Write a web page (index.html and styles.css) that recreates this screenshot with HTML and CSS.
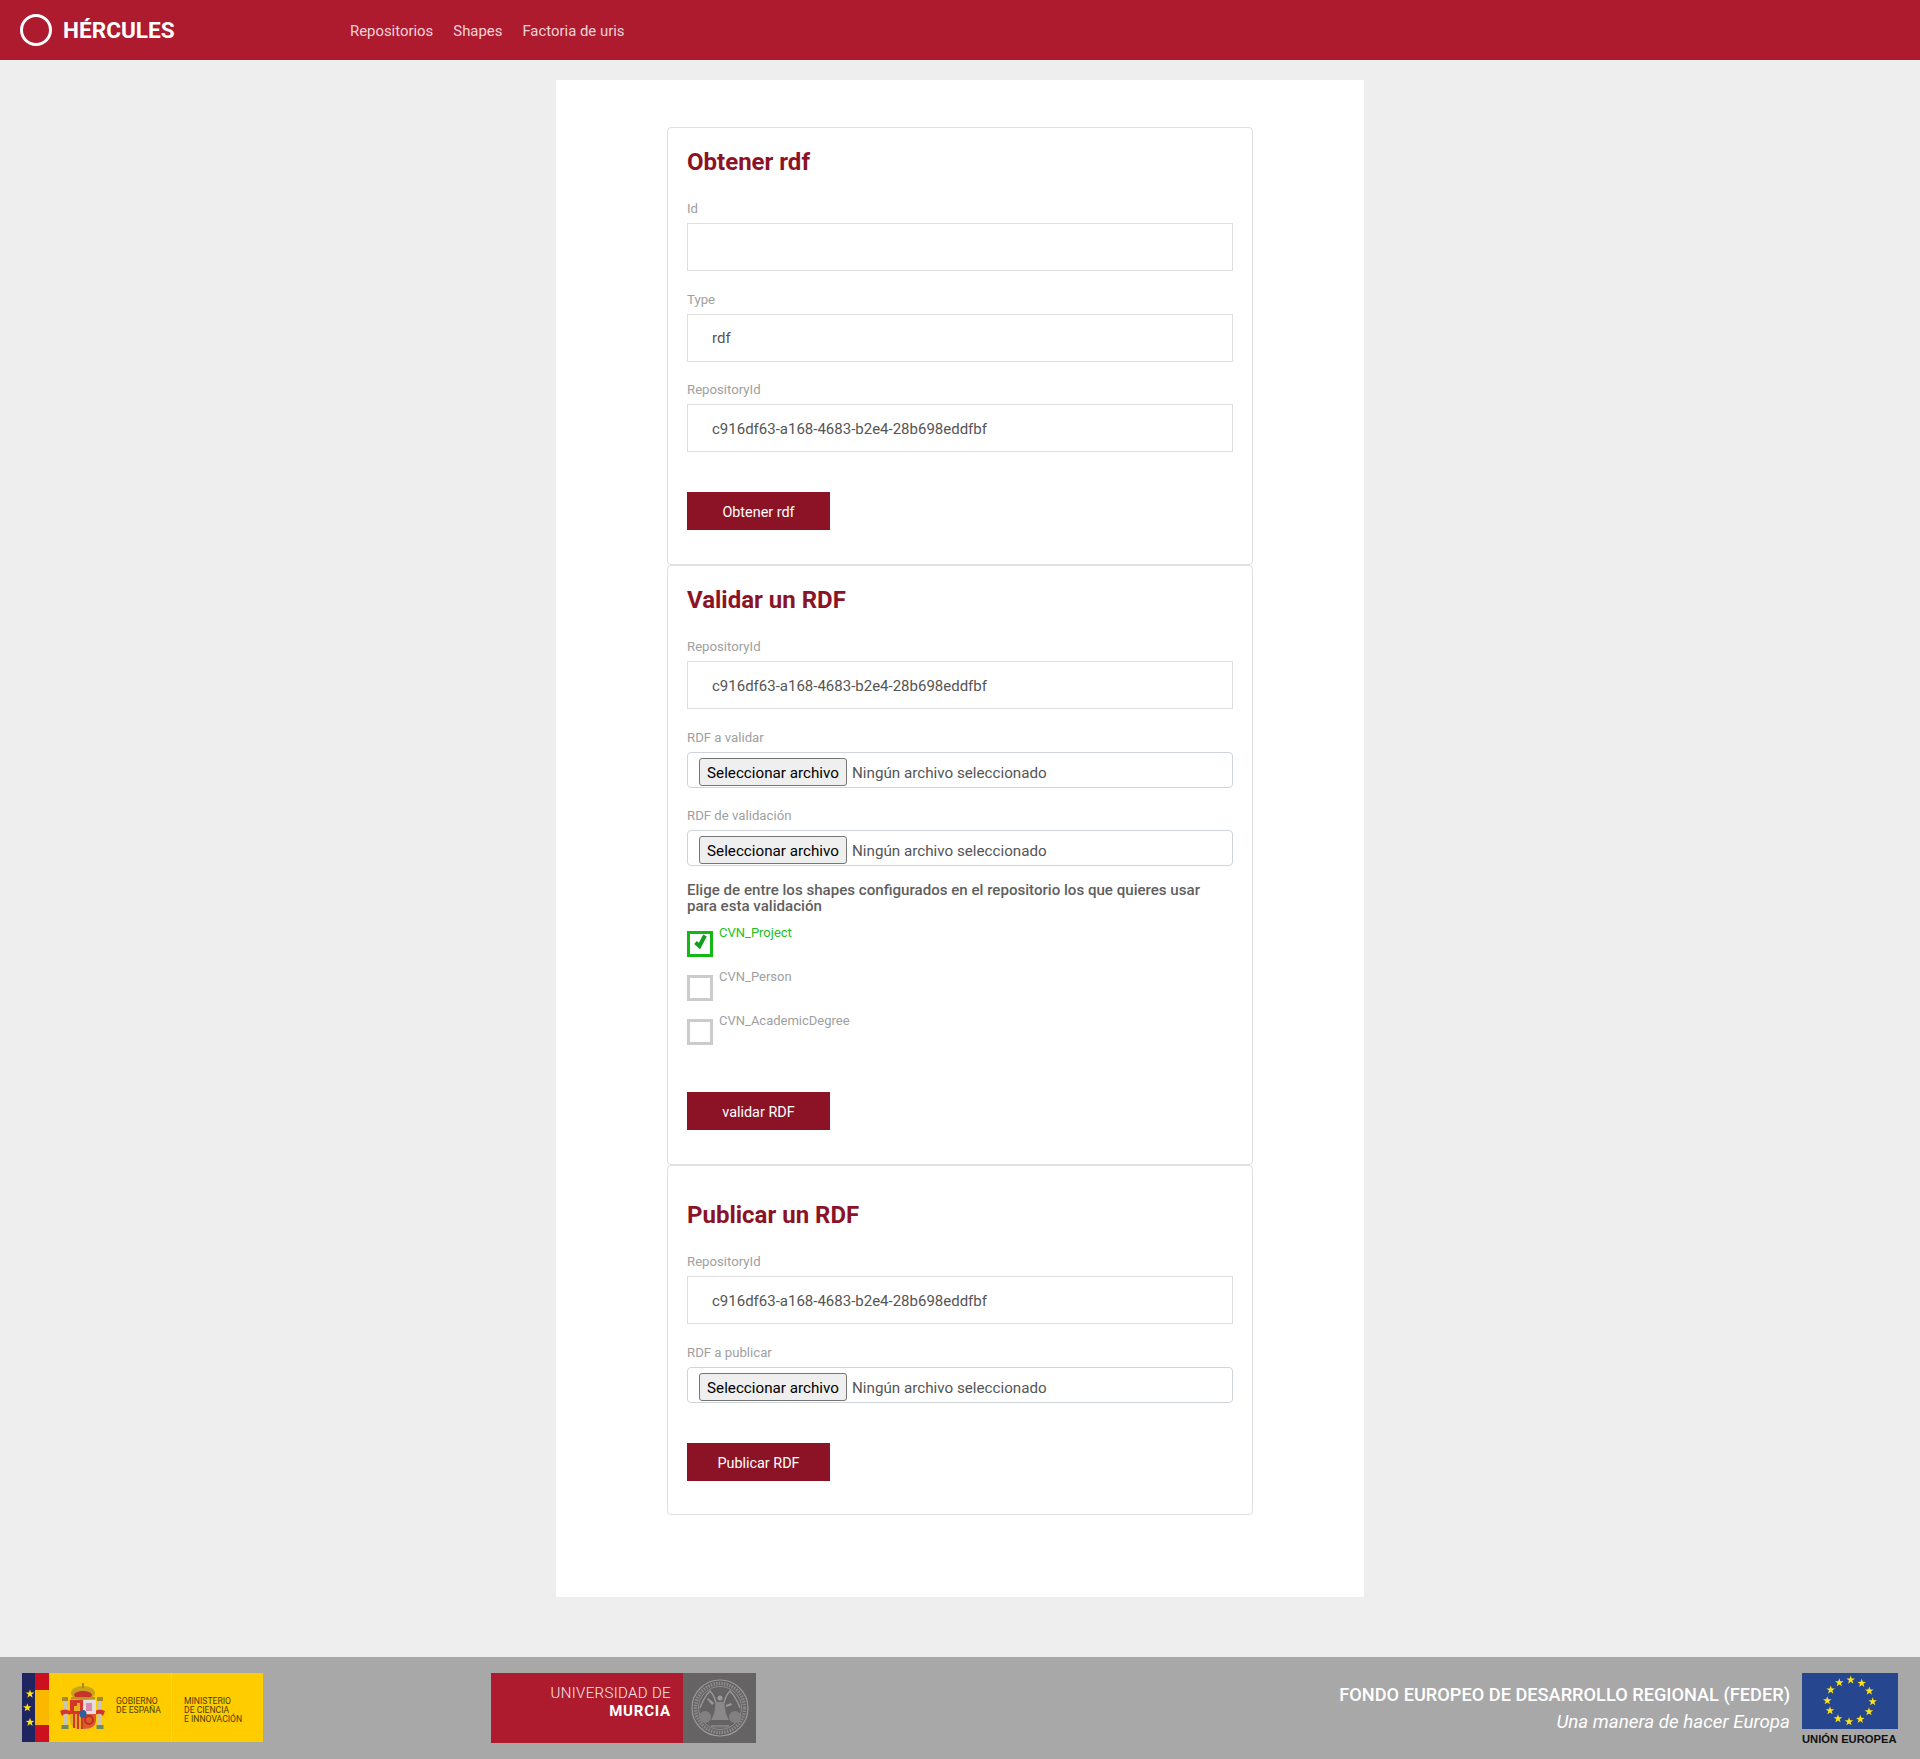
FILE: index.html
```html
<!DOCTYPE html>
<html lang="es">

<head>
    <meta charset="utf-8">
    <title>Hércules</title>
    <link rel="stylesheet" href="styles.css">
</head>

<body>
    <header class="topbar">
        <div class="brand">
            <span class="brand-ring"></span>
            <span class="brand-name">HÉRCULES</span>
        </div>
        <nav class="topnav">
            <a href="#">Repositorios</a>
            <a href="#">Shapes</a>
            <a href="#">Factoria de uris</a>
        </nav>
    </header>

    <main class="panel">
        <section class="card">
            <h2>Obtener rdf</h2>
            <div class="field">
                <label>Id</label>
                <input type="text" value="">
            </div>
            <div class="field">
                <label>Type</label>
                <input type="text" value="rdf">
            </div>
            <div class="field">
                <label>RepositoryId</label>
                <input type="text" value="c916df63-a168-4683-b2e4-28b698eddfbf">
            </div>
            <button class="btn">Obtener rdf</button>
        </section>

        <section class="card">
            <h2>Validar un RDF</h2>
            <div class="field">
                <label>RepositoryId</label>
                <input type="text" value="c916df63-a168-4683-b2e4-28b698eddfbf">
            </div>
            <div class="field">
                <label>RDF a validar</label>
                <div class="file-box">
                    <button class="file-btn">Seleccionar archivo</button>
                    <span class="file-name">Ningún archivo seleccionado</span>
                </div>
            </div>
            <div class="field field-tight">
                <label>RDF de validación</label>
                <div class="file-box">
                    <button class="file-btn">Seleccionar archivo</button>
                    <span class="file-name">Ningún archivo seleccionado</span>
                </div>
            </div>
            <p class="hint">Elige de entre los shapes configurados en el repositorio los que quieres usar para esta validación</p>
            <div class="shapes">
                <div class="shape shape-on">
                    <span class="tick">
                        <svg width="20" height="20" viewBox="0 0 20 20"><polyline points="5.5,8.5 9.5,12 15,1.5" fill="none" stroke="#0fa01c" stroke-width="4"/></svg>
                    </span>
                    <span class="shape-name">CVN_Project</span>
                </div>
                <div class="shape">
                    <span class="tick"></span>
                    <span class="shape-name">CVN_Person</span>
                </div>
                <div class="shape">
                    <span class="tick"></span>
                    <span class="shape-name">CVN_AcademicDegree</span>
                </div>
            </div>
            <button class="btn">validar RDF</button>
        </section>

        <section class="card card-last">
            <h2>Publicar un RDF</h2>
            <div class="field">
                <label>RepositoryId</label>
                <input type="text" value="c916df63-a168-4683-b2e4-28b698eddfbf">
            </div>
            <div class="field">
                <label>RDF a publicar</label>
                <div class="file-box">
                    <button class="file-btn">Seleccionar archivo</button>
                    <span class="file-name">Ningún archivo seleccionado</span>
                </div>
            </div>
            <button class="btn">Publicar RDF</button>
        </section>
    </main>

    <footer class="footer">
        <div class="logo-spain">
            <svg class="spain-mark" width="86" height="69" viewBox="0 0 86 69">
                <defs>
                    <polygon id="star" points="0,-4.5 1.06,-1.45 4.28,-1.39 1.71,.55 2.64,3.64 0,1.8 -2.64,3.64 -1.71,.55 -4.28,-1.39 -1.06,-1.45"/>
                </defs>
                <rect width="13" height="69" fill="#1f2560"/>
                <rect x="13" width="14" height="69" fill="#cc1020"/>
                <rect x="13" y="17" width="14" height="35" fill="#fbb800"/>
                <use href="#star" x="8" y="21" fill="#fbe316"/>
                <use href="#star" x="5.3" y="34.7" fill="#fbe316"/>
                <use href="#star" x="8" y="49.3" fill="#fbe316"/>
                <!-- columnas -->
                <rect x="41" y="27" width="4" height="26" fill="#c9c6b8"/>
                <rect x="76" y="27" width="4" height="26" fill="#c9c6b8"/>
                <rect x="40" y="24" width="6" height="4" fill="#a58a2a"/>
                <rect x="75" y="24" width="6" height="4" fill="#a58a2a"/>
                <rect x="39.5" y="52" width="7" height="4" fill="#6f8a5a"/>
                <rect x="74.5" y="52" width="7" height="4" fill="#6f8a5a"/>
                <path d="M38 38q5-3 10 0v4q-5-3-8 1z" fill="#d8352a"/>
                <path d="M83 38q-5-3-10 0v4q5-3 8 1z" fill="#d8352a"/>
                <!-- corona -->
                <ellipse cx="61" cy="20" rx="12" ry="7" fill="#c9a21e"/>
                <ellipse cx="61" cy="22" rx="9" ry="4" fill="#c8342c"/>
                <rect x="49" y="24" width="24" height="2.5" fill="#b8941c"/>
                <rect x="60" y="10" width="2" height="5" fill="#a58a2a"/>
                <!-- escudo -->
                <path d="M48 27h26v20q0 9-13 9t-13-9z" fill="#d9cfc9"/>
                <path d="M48 27h13v14h-13z" fill="#d8352a"/>
                <path d="M55 30h3v8h-6v-5h3z" fill="#e8b31e"/>
                <path d="M61 27h13v14h-13z" fill="#e4dde0"/>
                <path d="M64 30h6v8h-6z" fill="#d88aa8"/>
                <path d="M48 41h13v15q-13 1-13-9z" fill="#e2ac1c"/>
                <path d="M51 41h2v14h-2zM55 41h2v15h-2zM59 41h2v15h-2z" fill="#d0392a"/>
                <path d="M61 41h13v6q0 9-13 9z" fill="#e0592a"/>
                <circle cx="67" cy="47" r="4" fill="none" stroke="#b9301f" stroke-width="2"/>
                <ellipse cx="61" cy="41" rx="3.5" ry="4" fill="#2f5f9f"/>
            </svg>
            <div class="spain-gov">GOBIERNO<br>DE ESPAÑA</div>
            <div class="spain-min">MINISTERIO<br>DE CIENCIA<br>E INNOVACIÓN</div>
        </div>

        <div class="logo-um">
            <div class="um-name">
                <span class="um-top">UNIVERSIDAD DE</span>
                <span class="um-bottom">MURCIA</span>
            </div>
            <div class="um-seal">
                <svg width="60" height="60" viewBox="0 0 60 60">
                    <g fill="none" stroke="#9b9a9a">
                        <circle cx="30" cy="30" r="28" stroke-width="1.2"/>
                        <circle cx="30" cy="30" r="24.5" stroke-width="3.5" stroke-dasharray="1.5 1.2" stroke="#8c8b8b"/>
                        <circle cx="30" cy="30" r="21.5" stroke-width=".8"/>
                        <path d="M10 30c3-8 6-13 10-17 4 4 6 9 7 17M33 30c1-8 3-13 7-17 4 4 7 9 10 17" stroke-width="1.3"/>
                    </g>
                    <circle cx="30" cy="20" r="2.5" fill="#9b9a9a"/>
                    <path d="M26 24h8l2 12 3 6H21l3-6z" fill="#8a8989"/>
                    <path d="M22 27l-5-6 1-1 6 5zM36 27l5-2 1 2-6 2z" fill="#9b9a9a"/>
                    <circle cx="15" cy="39" r="6" fill="#828181"/>
                    <circle cx="45" cy="39" r="6" fill="#828181"/>
                    <rect x="21" y="47" width="18" height="2.5" fill="#828181"/>
                </svg>
            </div>
        </div>

        <div class="feder">
            <div class="feder-text">
                <div class="feder-title">FONDO EUROPEO DE DESARROLLO REGIONAL (FEDER)</div>
                <div class="feder-motto">Una manera de hacer Europa</div>
            </div>
            <div class="eu">
                <svg class="eu-flag" width="96" height="56" viewBox="0 0 96 56">
                    <rect width="96" height="56" fill="#26468f"/>
                    <g fill="#fbe316">
                        <use href="#star" x="48.7" y="7"/>
                        <use href="#star" x="59.7" y="10.3"/>
                        <use href="#star" x="67.3" y="18"/>
                        <use href="#star" x="70.7" y="28.7"/>
                        <use href="#star" x="67" y="38.7"/>
                        <use href="#star" x="58.3" y="46.3"/>
                        <use href="#star" x="47" y="48.7"/>
                        <use href="#star" x="36" y="45.7"/>
                        <use href="#star" x="28" y="37.7"/>
                        <use href="#star" x="25.3" y="27.7"/>
                        <use href="#star" x="28.7" y="17"/>
                        <use href="#star" x="37.3" y="9.7"/>
                    </g>
                </svg>
                <div class="eu-name">UNIÓN EUROPEA</div>
            </div>
        </div>
    </footer>
</body>

</html>
```

FILE: styles.css
```css
* {
    box-sizing: border-box;
}

body {
    margin: 0;
    background-color: #eee;
    font-family: Roboto, "Liberation Sans", sans-serif;
    color: #555;
}

/* barra superior */
.topbar {
    display: flex;
    align-items: center;
    height: 60px;
    padding-left: 20px;
    background-color: #ae1b2f;
}

.brand {
    display: flex;
    align-items: center;
    width: 330px;
}

.brand-ring {
    width: 32px;
    height: 32px;
    border: 3px solid #fff;
    border-radius: 50%;
}

.brand-name {
    margin-left: 11px;
    font-size: 22.6px;
    font-weight: 700;
    color: #fff;
}

.topnav {
    display: flex;
    gap: 20px;
    padding-top: 1px;
}

.topnav a {
    font-size: 14.9px;
    color: #f3d3d8;
    text-decoration: none;
}

/* contenido */
.panel {
    width: 808px;
    margin: 20px auto 60px;
    padding: 47px 111px 82px;
    background-color: #fff;
}

.card {
    padding: 19px 19px 34px;
    border: 1px solid #e0e0e0;
    border-radius: 4px;
}

.card-last {
    padding-top: 34px;
    padding-bottom: 33px;
}

h2 {
    height: 30px;
    margin: 0 0 24px;
    font-size: 24px;
    line-height: 30px;
    font-weight: 700;
    color: #8c1326;
}

.field {
    margin-bottom: 20.5px;
}

.field-tight {
    margin-bottom: 16px;
}

.field label {
    display: block;
    height: 16px;
    margin-bottom: 6px;
    font-size: 13.2px;
    line-height: 16px;
    color: #a0a0a0;
}

.field input {
    display: block;
    width: 100%;
    height: 48px;
    padding: 1px 24px 0;
    border: 1px solid #e2dede;
    font-family: inherit;
    font-size: 15px;
    color: #555;
    outline: none;
}

.file-box {
    display: flex;
    align-items: flex-start;
    height: 36px;
    padding: 5px 11px 0;
    border: 1px solid #ced4da;
    border-radius: 4px;
}

.file-btn {
    width: 148px;
    height: 28px;
    padding: 2px 0 0;
    border: 1px solid #767676;
    border-radius: 3px;
    background-color: #efefef;
    font-family: inherit;
    font-size: 15.2px;
    color: #000;
}

.file-name {
    margin-left: 5px;
    padding-top: 6px;
    font-size: 15.2px;
    line-height: 18px;
}

.hint {
    margin: 0 0 17px;
    font-size: 15.1px;
    font-weight: 500;
    line-height: 16px;
    color: #5f5f5f;
}

.shapes {
    display: flex;
    flex-direction: column;
    gap: 18px;
    margin-bottom: 47px;
}

.shape {
    display: flex;
    align-items: flex-start;
    height: 26px;
}

.tick {
    width: 26px;
    height: 26px;
    border: 3px solid #ccc;
}

.tick svg {
    display: block;
}

.shape-on .tick {
    border-color: #14b814;
}

.shape-name {
    margin: -6px 0 0 6px;
    font-size: 13px;
    line-height: 16px;
    color: #a0a0a0;
}

.shape-on .shape-name {
    color: #22c022;
}

.btn {
    display: block;
    width: 143px;
    height: 38px;
    margin-top: 40px;
    padding-top: 4px;
    border: none;
    background-color: #8c1326;
    font-family: inherit;
    font-size: 14.4px;
    font-weight: 400;
    color: #fff;
}

/* pie */
.footer {
    display: grid;
    grid-template-columns: 469px 1fr auto;
    height: 102px;
    padding: 16px 22px 0;
    background-color: #a8a8a8;
}

.logo-spain {
    display: flex;
    width: 241px;
    height: 69px;
    background-color: #fc0;
    font-size: 8.6px;
    line-height: 9px;
    color: #4a3d00;
}

.spain-mark {
    flex: none;
}

.spain-gov {
    width: 56px;
    margin-left: 8px;
    padding-top: 24px;
    border-right: 1px solid #fcd22e;
    white-space: nowrap;
}

.spain-min {
    margin-left: 12px;
    padding-top: 24px;
    white-space: nowrap;
}

.logo-um {
    display: flex;
    width: 265px;
    height: 70px;
}

.um-name {
    display: flex;
    flex-direction: column;
    align-items: flex-end;
    width: 192px;
    padding: 11px 12px 0 0;
    background-color: #ae1b2e;
    color: #fff;
}

.um-top {
    font-size: 15px;
    line-height: 18px;
    font-weight: 300;
    letter-spacing: .35px;
    color: #fbeaec;
}

.um-bottom {
    font-size: 15px;
    line-height: 18px;
    font-weight: 700;
    letter-spacing: .8px;
}

.um-seal {
    display: flex;
    align-items: center;
    justify-content: center;
    flex: 1;
    background-color: #656363;
}

.feder {
    display: flex;
    gap: 12px;
}

.feder-text {
    padding-top: 11px;
    text-align: right;
    color: #fff;
}

.feder-title {
    font-size: 18.2px;
    line-height: 22px;
    font-weight: 500;
}

.feder-motto {
    margin-top: 5px;
    font-size: 18.8px;
    line-height: 22px;
    font-style: italic;
    font-weight: 400;
}

.eu {
    width: 96px;
}

.eu-flag {
    display: block;
}

.eu-name {
    margin-top: 4px;
    font-family: "Liberation Sans", sans-serif;
    font-size: 11.2px;
    line-height: 12px;
    font-weight: 700;
    white-space: nowrap;
    color: #111;
}
```
